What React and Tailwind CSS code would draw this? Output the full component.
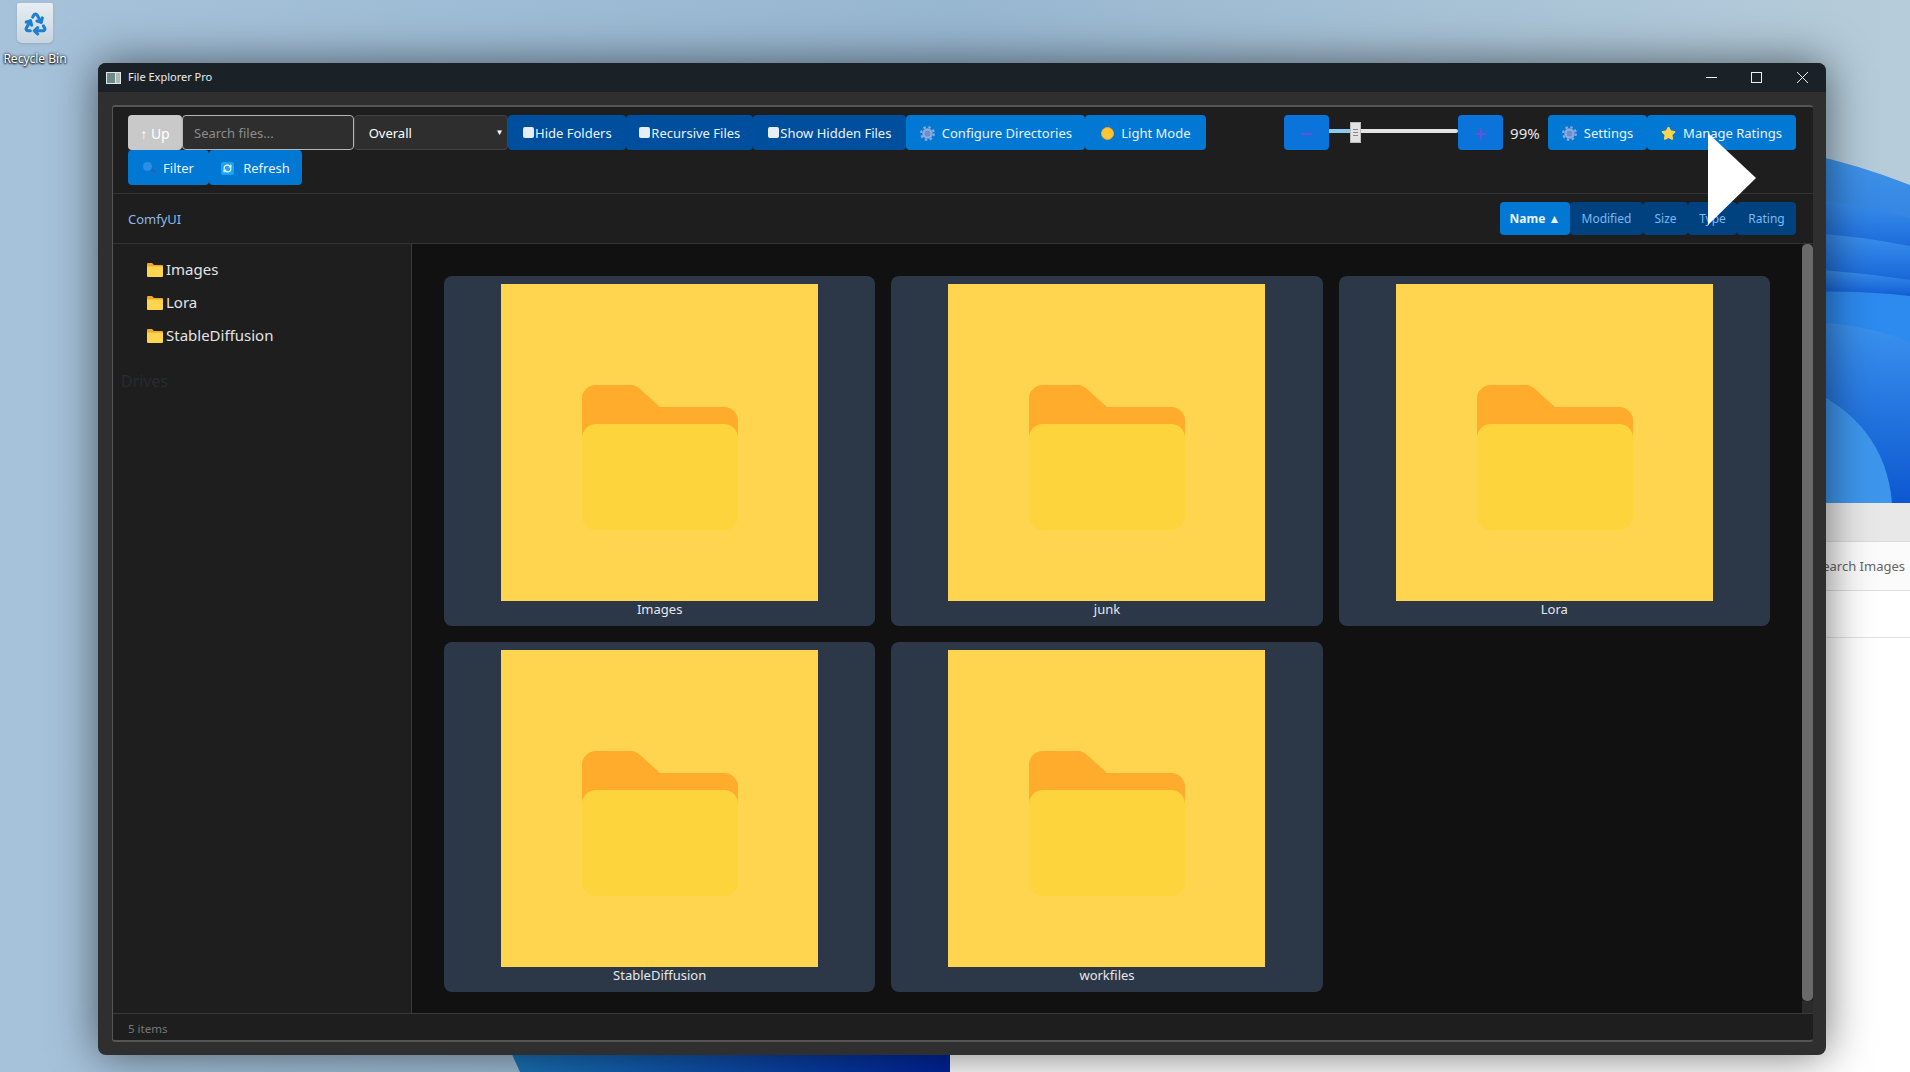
import { Minus, Plus, Recycle, RefreshCw, Star } from "lucide-react";

const folders = ["Images", "junk", "Lora", "StableDiffusion", "workfiles"];
const treeItems = ["Images", "Lora", "StableDiffusion"];

/* ===== small drawings ===== */
const FolderArt = () => (
  <svg viewBox="0 0 317 317" className="block w-[317px] h-[317px]">
    <rect width="317" height="317" fill="#ffd44f" />
    <path d="M81 115a14 14 0 0 1 14-14h35a14 14 0 0 1 9 4l20 18h64a14 14 0 0 1 14 14v30H81z" fill="#ffab2b" />
    <path d="M81 154a14 14 0 0 1 14-14h128a14 14 0 0 1 14 14v78a14 14 0 0 1-14 14H95a14 14 0 0 1-14-14z" fill="#fdd43c" />
  </svg>
);

const TreeFolder = () => (
  <svg viewBox="0 0 16 15" className="w-4 h-[15px] shrink-0">
    <path d="M0 2a1 1 0 0 1 1-1h4l2 2h8a1 1 0 0 1 1 1v2H0z" fill="#f5a623" />
    <path d="M0 4.5h15a1 1 0 0 1 1 1V14a1 1 0 0 1-1 1H1a1 1 0 0 1-1-1z" fill="#ffd54f" />
  </svg>
);

const Gear = () => (
  <svg viewBox="0 0 16 16" className="w-[15px] h-[15px] shrink-0">
    <circle cx="8" cy="8" r="6.8" fill="none" stroke="#8fa8dc" strokeWidth="2.2" strokeDasharray="2.7 2.64" />
    <circle cx="8" cy="8" r="4.2" fill="none" stroke="#8fa8dc" strokeWidth="2.8" />
    <circle cx="8" cy="8" r="2.8" fill="#6f8fcf" />
  </svg>
);

const Check = () => <span className="w-[11px] h-[11px] mr-px bg-[#e6edf5] rounded-[2px] mb-[2px] shrink-0" />;

const ToolButton = ({ className, children }) => (
  <div className={`h-[35px] pt-[2px] flex items-center justify-center rounded-[4px] text-[13px] text-[#eaf3fb] shrink-0 ${className}`}>
    {children}
  </div>
);

const SortButton = ({ className, children }) => (
  <div className={`h-[33px] flex items-center justify-center rounded-[4px] text-[12px] ${className}`}>{children}</div>
);

const Wallpaper = () => (
  <svg viewBox="0 0 1910 1072" className="absolute inset-0 w-full h-full">
    <defs>
      <linearGradient id="sky" x1="0" y1="0" x2="1" y2="0">
        <stop offset="0" stopColor="#a6c2da" />
        <stop offset="0.5" stopColor="#97b6d0" />
        <stop offset="1" stopColor="#b6ccda" />
      </linearGradient>
      <linearGradient id="bloom" x1="0" y1="0" x2="0" y2="1">
        <stop offset="0" stopColor="#3f95ea" />
        <stop offset="1" stopColor="#0a3fc4" />
      </linearGradient>
      <linearGradient id="band" x1="0" y1="0" x2="0" y2="1">
        <stop offset="0" stopColor="#3b92ee" />
        <stop offset="1" stopColor="#0b55cf" />
      </linearGradient>
      <linearGradient id="low" x1="0" y1="0" x2="1" y2="0">
        <stop offset="0" stopColor="#1a74b8" />
        <stop offset="1" stopColor="#00239a" />
      </linearGradient>
    </defs>
    <rect width="1910" height="1072" fill="url(#sky)" />
    <path d="M1800 152Q1860 165 1910 185V510H1800z" fill="url(#bloom)" />
    <path d="M1800 197Q1860 205 1910 218V275H1800z" fill="url(#band)" />
    <path d="M1800 232Q1860 236 1910 246V300H1800z" fill="url(#band)" />
    <path d="M1800 269Q1860 272 1910 280V300H1800z" fill="url(#band)" />
    <path d="M1800 292Q1860 290 1910 296V345H1800z" fill="#2d8aef" />
    <path d="M1800 322Q1860 322 1910 342V510H1800z" fill="url(#band)" />
    <path d="M1800 385Q1885 420 1892 503H1800z" fill="#3e96ec" />
    <path d="M510 1050H950V1072H520z" fill="url(#low)" />
  </svg>
);

export default function App() {
  return (
    <div className="relative w-[1910px] h-[1072px] overflow-hidden font-['Noto_Sans',sans-serif]">
      <Wallpaper />

      {/* ===== desktop icon ===== */}
      <div className="absolute left-0 top-[3px] w-[70px] flex flex-col items-center">
        <div className="w-9 h-10 bg-gradient-to-b from-[#e8eef2] to-[#c6d5e0] rounded-b-[5px] rounded-t-[2px] flex items-center justify-center shadow-sm">
          <Recycle className="w-[25px] h-[25px] text-[#1f7fd0]" strokeWidth={3} />
        </div>
        <span className="mt-2 text-[12px] leading-4 text-white [text-shadow:0_0_3px_#000,0_1px_2px_#000]">Recycle Bin</span>
      </div>

      {/* ===== window behind ===== */}
      <div className="absolute left-[950px] right-0 top-[503px] bottom-0 bg-white flex flex-col">
        <div className="h-[39px] bg-[#e8e8e8] border-b border-[#dadada]" />
        <div className="h-[49px] pt-px bg-[#fbfbfb] border-b border-[#dedede] flex items-center justify-end pr-[5px] text-[13px] text-[#666]">
          Search Images
        </div>
        <div className="h-[47px] border-b border-[#e2e2e2]" />
      </div>

      {/* ===== file explorer window ===== */}
      <div className="absolute left-[98px] top-[63px] w-[1728px] h-[992px] bg-[#2f2f2f] rounded-[8px] flex flex-col shadow-[0_0_45px_rgba(0,0,0,0.55)]">
        <div className="h-[29px] shrink-0 bg-[#1b2227] rounded-t-[8px] flex items-center">
          <div className="ml-2 w-[15px] h-3 bg-[#dfe6e6] flex gap-px p-px">
            <span className="w-2 h-full bg-[#6d8a86]" />
            <span className="w-1 h-full bg-[#aab8b8]" />
          </div>
          <span className="ml-[7px] text-[11px] text-[#e8ecee]">File Explorer Pro</span>
          <div className="ml-auto flex items-center text-[#f0f0f0]">
            <svg viewBox="0 0 11 11" className="w-[11px] h-[11px]"><path d="M0 5.5h11" stroke="currentColor" /></svg>
            <svg viewBox="0 0 11 11" className="ml-[34px] w-[11px] h-[11px]"><rect x="0.5" y="0.5" width="10" height="10" fill="none" stroke="currentColor" /></svg>
            <svg viewBox="0 0 11 11" className="ml-[35px] mr-[18px] w-[11px] h-[11px]"><path d="M0 0l11 11M11 0L0 11" stroke="currentColor" /></svg>
          </div>
        </div>

        <div className="mt-[13px] ml-[14px] w-[1701px] h-[937px] flex flex-col bg-[#1e1e1e] border-t-2 border-b-2 border-l border-[#555] rounded-[3px] overflow-hidden">
          {/* ===== toolbar ===== */}
          <div className="h-[87px] shrink-0 border-b border-[#333] pt-2 pl-[15px] pr-[17px]">
            <div className="flex items-center">
              <ToolButton className="w-[54px] bg-[#c9c9c9] text-[14px] text-white">↑ Up</ToolButton>
              <div className="w-[172px] h-[35px] flex items-center pl-[11px] pt-[2px] text-[13px] text-[#8c8c8c] bg-[#2e2e2e] border border-[#b5b5b5] rounded-[4px]">
                Search files...
              </div>
              <div className="w-[155px] h-[35px] flex items-center justify-between pl-[14px] pr-[4px] pt-[2px] text-[13px] text-white bg-[#2e2e2e] border border-[#444] rounded-[4px]">
                Overall
                <span className="text-[8px] mb-1">▼</span>
              </div>
              <ToolButton className="w-[118px] bg-[#004f9f]"><Check />Hide Folders</ToolButton>
              <ToolButton className="w-[127px] bg-[#004f9f]"><Check />Recursive Files</ToolButton>
              <ToolButton className="w-[153px] bg-[#004f9f]"><Check />Show Hidden Files</ToolButton>
              <ToolButton className="w-[179px] gap-[7px] bg-[#0078d4]"><Gear />Configure Directories</ToolButton>
              <ToolButton className="w-[121px] gap-[7px] bg-[#0078d4]">
                <span className="w-[13px] h-[13px] rounded-full bg-[#fcc934] border border-[#f5a623]" />
                Light Mode
              </ToolButton>

              <ToolButton className="ml-[78px] w-[45px] bg-[#0a74da]">
                <Minus className="w-4 h-4 text-[#6a4fd8]" strokeWidth={3} />
              </ToolButton>
              <div className="relative w-[129px] h-[35px] flex items-center">
                <div className="w-[21px] h-1 mb-[3px] bg-[#8ccaf0]" />
                <div className="flex-1 h-1 mb-[3px] bg-[#e4e4e4] rounded-r-sm" />
                <div className="absolute left-[21px] top-[7px] w-[11px] h-[21px] bg-[#e2e2e2] border border-[#bbb] flex flex-col items-center justify-center gap-[2px]">
                  <span className="w-[5px] h-px bg-[#888]" />
                  <span className="w-[5px] h-px bg-[#888]" />
                  <span className="w-[5px] h-px bg-[#888]" />
                </div>
              </div>
              <ToolButton className="w-[45px] bg-[#0a74da]">
                <Plus className="w-4 h-4 text-[#6a4fd8]" strokeWidth={3} />
              </ToolButton>
              <span className="ml-[7px] w-[38px] pt-[2px] text-[15px] text-[#e8e8e8]">99%</span>
              <ToolButton className="w-[99px] gap-[7px] bg-[#0078d4]"><Gear />Settings</ToolButton>
              <ToolButton className="w-[149px] gap-[7px] bg-[#0078d4]">
                <Star className="w-[15px] h-[15px] text-[#fcd34d] fill-[#fcd34d]" />
                Manage Ratings
              </ToolButton>
            </div>
            <div className="flex items-center">
              <ToolButton className="w-[81px] gap-[7px] bg-[#0078d4]">
                <span className="relative w-[13px] h-[13px]">
                  <span className="absolute left-0 top-0 w-[9px] h-[9px] rounded-full bg-[#2a8fe8]" />
                  <span className="absolute left-[8px] top-[8px] w-[5px] h-[2px] rotate-45 bg-[#3b5aa8]" />
                </span>
                Filter
              </ToolButton>
              <ToolButton className="w-[93px] gap-[9px] bg-[#0078d4]">
                <span className="w-[13px] h-[13px] bg-[#1aa3ef] rounded-[2px] flex items-center justify-center">
                  <RefreshCw className="w-[9px] h-[9px] text-white" strokeWidth={3} />
                </span>
                Refresh
              </ToolButton>
            </div>
          </div>

          {/* ===== path + sort ===== */}
          <div className="h-[50px] shrink-0 border-b border-[#333] pl-[15px] pr-[17px] flex items-center justify-between">
            <span className="pt-[2px] text-[13px] text-[#8db8e8]">ComfyUI</span>
            <div className="flex items-center">
              <SortButton className="w-[70px] pt-px bg-[#0078d4] text-[#eaf3fb] font-bold">Name ▲</SortButton>
              <SortButton className="w-[73px] pt-px bg-[#00427f] text-[#7ab8f2]">Modified</SortButton>
              <SortButton className="w-[45px] pt-px bg-[#00427f] text-[#7ab8f2]">Size</SortButton>
              <SortButton className="w-[49px] pt-px bg-[#00427f] text-[#7ab8f2]">Type</SortButton>
              <SortButton className="w-[59px] pt-px bg-[#00427f] text-[#7ab8f2]">Rating</SortButton>
            </div>
          </div>

          {/* ===== body ===== */}
          <div className="flex-1 flex min-h-0">
            <div className="w-[299px] shrink-0 border-r border-[#3a3a3a] pl-[34px] pt-[9px]">
              {treeItems.map((name) => (
                <div key={name} className="h-[33px] flex items-center gap-[3px] text-[15px] text-[#e4e4e4]">
                  <TreeFolder />
                  {name}
                </div>
              ))}
              <div className="ml-[-26px] mt-[17px] text-[16px] text-[#262a33]">Drives</div>
            </div>

            <div className="flex-1 bg-[#111111] p-8">
              <div className="grid grid-cols-3 gap-4">
                {folders.map((name) => (
                  <div key={name} className="h-[350px] bg-[#2c3848] rounded-[8px] pt-2 flex flex-col items-center">
                    <FolderArt />
                    <span className="text-[13px] leading-[16px] text-[#e5e7eb]">{name}</span>
                  </div>
                ))}
              </div>
            </div>

            <div className="w-[11px] shrink-0 bg-[#1e1e1e] flex flex-col">
              <div className="flex-1 bg-[#6a6a6a] rounded-[5px]" />
              <div className="h-[12px] bg-[#2b2b2b]" />
            </div>
          </div>

          {/* ===== status bar ===== */}
          <div className="h-[27px] shrink-0 border-t border-[#3a3a3a] pl-[15px] pt-[4px] flex items-center text-[11.5px] text-[#777]">
            5 items
          </div>
        </div>
      </div>

      {/* ===== video play arrow ===== */}
      <svg viewBox="0 0 48 92" className="absolute left-[1708px] top-[133px] w-12 h-[92px]">
        <path d="M0 0L48 45L0 92z" fill="#ffffff" />
      </svg>
    </div>
  );
}
